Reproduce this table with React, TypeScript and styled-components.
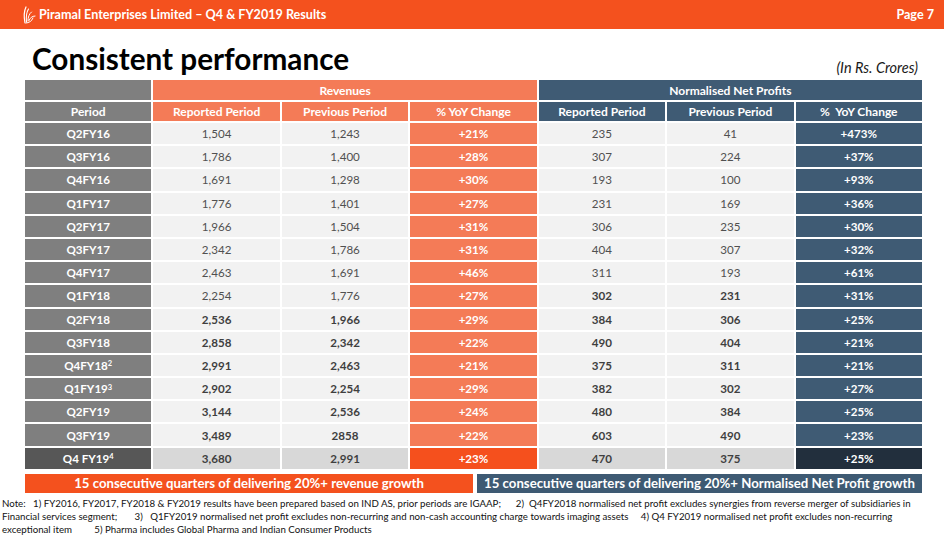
import React from 'react';
import styled, { createGlobalStyle, css } from 'styled-components';

const GlobalStyle = createGlobalStyle`
  html, body {
    margin: 0;
    padding: 0;
    background: #fff;
  }
  body {
    font-family: Lato, "Liberation Sans", sans-serif;
  }
`;

const Slide = styled.div`
  width: 944px;
  height: 536px;
  overflow: hidden;
  display: flex;
  flex-direction: column;
`;

const TopBar = styled.div`
  height: 29px;
  background: #f4511e;
  display: flex;
  align-items: center;
  padding: 0 10px 0 22px;
  color: #fff;
  font-weight: 700;
  font-size: 12.6px;
`;

const Brand = styled.div`
  display: flex;
  align-items: center;
  gap: 3px;
  flex: 1;
`;

const TitleRow = styled.div`
  display: flex;
  align-items: flex-end;
  justify-content: space-between;
  padding: 8px 26px 0 32px;
  height: 37px;
`;

const Title = styled.h1`
  margin: 0;
  font-size: 29.7px;
  font-weight: 700;
  color: #000;
  line-height: 1;
`;

const Units = styled.div`
  font-style: italic;
  font-size: 14.5px;
  color: #1a1a1a;
  margin-bottom: -2px;
`;

const Table = styled.div`
  margin: 6px 0 0 25px;
  width: 897px;
  display: grid;
  grid-template-columns: repeat(7, 1fr);
  grid-template-rows: 20px 19px;
  grid-auto-rows: 21.2px;
  column-gap: 2px;
  row-gap: 2px;
`;

type Tone = 'period' | 'periodLast' | 'rev' | 'revLast' | 'np' | 'npLast' | 'plain' | 'plainLast';

const tones: Record<Tone, string> = {
  period: '#7f7f7f',
  periodLast: '#575757',
  rev: '#f47b57',
  revLast: '#f5501d',
  np: '#3f5b74',
  npLast: '#222f3d',
  plain: '#f2f2f2',
  plainLast: '#d8d8d8',
};

const Cell = styled.div<{ $tone: Tone; $bold?: boolean; $span?: number; $head?: boolean }>`
  background: ${(p) => tones[p.$tone]};
  display: flex;
  align-items: center;
  justify-content: center;
  font-size: ${(p) => (p.$head ? '12px' : '11.6px')};
  font-weight: ${(p) => (p.$bold ? 700 : 400)};
  color: ${(p) => (p.$tone === 'plain' || p.$tone === 'plainLast' ? (p.$bold ? '#3f3f3f' : '#505050') : '#fff')};
  white-space: pre;
  ${(p) =>
    p.$span &&
    css`
      grid-column: span ${p.$span};
    `}

  sup {
    font-size: 7.5px;
    line-height: 0;
    position: relative;
    top: -1px;
  }
`;

const Banners = styled.div`
  margin: 5px 0 0 25px;
  width: 897px;
  display: grid;
  grid-template-columns: 448px 1fr;
  column-gap: 4px;
  height: 19px;
`;

const Banner = styled.div<{ $navy?: boolean }>`
  background: ${(p) => (p.$navy ? '#3e5a73' : '#f4511e')};
  color: #fff;
  font-weight: 700;
  font-size: 13.2px;
  display: flex;
  align-items: center;
  justify-content: center;
`;

const Notes = styled.div`
  padding: 4px 0 0 2px;
  font-size: 9.7px;
  line-height: 13px;
  color: #111;
`;

const NoteLine = styled.div`
  white-space: pre;
`;

const Logo = () => (
  <svg width="14" height="20" viewBox="0 0 14 20" fill="none" stroke="#fff" strokeLinecap="round">
    <path d="M3 18 C2 13 1 8 4 2" strokeWidth="1.2" />
    <path d="M4.5 17 C4 12 4 8 6.5 4" strokeWidth="1.1" />
    <path d="M6 16 C6 12 7 9 9.5 7" strokeWidth="1" />
    <path d="M7 15.5 C8 13 10 11 13 11" strokeWidth="1" />
    <path d="M4 18 C7 18 10 16 11 13" strokeWidth="1" />
  </svg>
);

interface Row {
  period: React.ReactNode;
  rep: string;
  prev: string;
  yoy: string;
  npRep: string;
  npPrev: string;
  npYoy: string;
  boldRev?: boolean;
  boldNp?: boolean;
  last?: boolean;
}

const rows: Row[] = [
  { period: 'Q2FY16', rep: '1,504', prev: '1,243', yoy: '+21%', npRep: '235', npPrev: '41', npYoy: '+473%' },
  { period: 'Q3FY16', rep: '1,786', prev: '1,400', yoy: '+28%', npRep: '307', npPrev: '224', npYoy: '+37%' },
  { period: 'Q4FY16', rep: '1,691', prev: '1,298', yoy: '+30%', npRep: '193', npPrev: '100', npYoy: '+93%' },
  { period: 'Q1FY17', rep: '1,776', prev: '1,401', yoy: '+27%', npRep: '231', npPrev: '169', npYoy: '+36%' },
  { period: 'Q2FY17', rep: '1,966', prev: '1,504', yoy: '+31%', npRep: '306', npPrev: '235', npYoy: '+30%' },
  { period: 'Q3FY17', rep: '2,342', prev: '1,786', yoy: '+31%', npRep: '404', npPrev: '307', npYoy: '+32%' },
  { period: 'Q4FY17', rep: '2,463', prev: '1,691', yoy: '+46%', npRep: '311', npPrev: '193', npYoy: '+61%' },
  { period: 'Q1FY18', rep: '2,254', prev: '1,776', yoy: '+27%', npRep: '302', npPrev: '231', npYoy: '+31%', boldNp: true },
  { period: 'Q2FY18', rep: '2,536', prev: '1,966', yoy: '+29%', npRep: '384', npPrev: '306', npYoy: '+25%', boldRev: true, boldNp: true },
  { period: 'Q3FY18', rep: '2,858', prev: '2,342', yoy: '+22%', npRep: '490', npPrev: '404', npYoy: '+21%', boldRev: true, boldNp: true },
  { period: <>Q4FY18<sup>2</sup></>, rep: '2,991', prev: '2,463', yoy: '+21%', npRep: '375', npPrev: '311', npYoy: '+21%', boldRev: true, boldNp: true },
  { period: <>Q1FY19<sup>3</sup></>, rep: '2,902', prev: '2,254', yoy: '+29%', npRep: '382', npPrev: '302', npYoy: '+27%', boldRev: true, boldNp: true },
  { period: 'Q2FY19', rep: '3,144', prev: '2,536', yoy: '+24%', npRep: '480', npPrev: '384', npYoy: '+25%', boldRev: true, boldNp: true },
  { period: 'Q3FY19', rep: '3,489', prev: '2858', yoy: '+22%', npRep: '603', npPrev: '490', npYoy: '+23%', boldRev: true, boldNp: true },
  { period: <>Q4 FY19<sup>4</sup></>, rep: '3,680', prev: '2,991', yoy: '+23%', npRep: '470', npPrev: '375', npYoy: '+25%', boldRev: true, boldNp: true, last: true },
];

const App: React.FC = () => {
  return (
    <Slide>
      <GlobalStyle />
      <TopBar>
        <Brand>
          <Logo />
          <span>Piramal Enterprises Limited – Q4 &amp; FY2019 Results</span>
        </Brand>
        <span>Page 7</span>
      </TopBar>

      <TitleRow>
        <Title>Consistent performance</Title>
        <Units>(In Rs. Crores)</Units>
      </TitleRow>

      <Table>
        <Cell $tone="period" />
        <Cell $tone="rev" $span={3} $bold $head>Revenues</Cell>
        <Cell $tone="np" $span={3} $bold $head>Normalised Net Profits</Cell>

        <Cell $tone="period" $bold $head>Period</Cell>
        <Cell $tone="rev" $bold $head>Reported Period</Cell>
        <Cell $tone="rev" $bold $head>Previous Period</Cell>
        <Cell $tone="rev" $bold $head>% YoY Change</Cell>
        <Cell $tone="np" $bold $head>Reported Period</Cell>
        <Cell $tone="np" $bold $head>Previous Period</Cell>
        <Cell $tone="np" $bold $head>{'%  YoY Change'}</Cell>

        {rows.map((r, i) => (
          <React.Fragment key={i}>
            <Cell $tone={r.last ? 'periodLast' : 'period'} $bold>{r.period}</Cell>
            <Cell $tone={r.last ? 'plainLast' : 'plain'} $bold={r.boldRev}>{r.rep}</Cell>
            <Cell $tone={r.last ? 'plainLast' : 'plain'} $bold={r.boldRev}>{r.prev}</Cell>
            <Cell $tone={r.last ? 'revLast' : 'rev'} $bold>{r.yoy}</Cell>
            <Cell $tone={r.last ? 'plainLast' : 'plain'} $bold={r.boldNp}>{r.npRep}</Cell>
            <Cell $tone={r.last ? 'plainLast' : 'plain'} $bold={r.boldNp}>{r.npPrev}</Cell>
            <Cell $tone={r.last ? 'npLast' : 'np'} $bold>{r.npYoy}</Cell>
          </React.Fragment>
        ))}
      </Table>

      <Banners>
        <Banner>15 consecutive quarters of delivering 20%+ revenue growth</Banner>
        <Banner $navy>15 consecutive quarters of delivering 20%+ Normalised Net Profit growth</Banner>
      </Banners>

      <Notes>
        <NoteLine>{'Note:   1) FY2016, FY2017, FY2018 & FY2019 results have been prepared based on IND AS, prior periods are IGAAP;      2)  Q4FY2018 normalised net profit excludes synergies from reverse merger of subsidiaries in'}</NoteLine>
        <NoteLine>{'Financial services segment;       3)   Q1FY2019 normalised net profit excludes non-recurring and non-cash accounting charge towards imaging assets     4) Q4 FY2019 normalised net profit excludes non-recurring'}</NoteLine>
        <NoteLine>{'exceptional item         5) Pharma includes Global Pharma and Indian Consumer Products'}</NoteLine>
      </Notes>
    </Slide>
  );
};

export default App;
